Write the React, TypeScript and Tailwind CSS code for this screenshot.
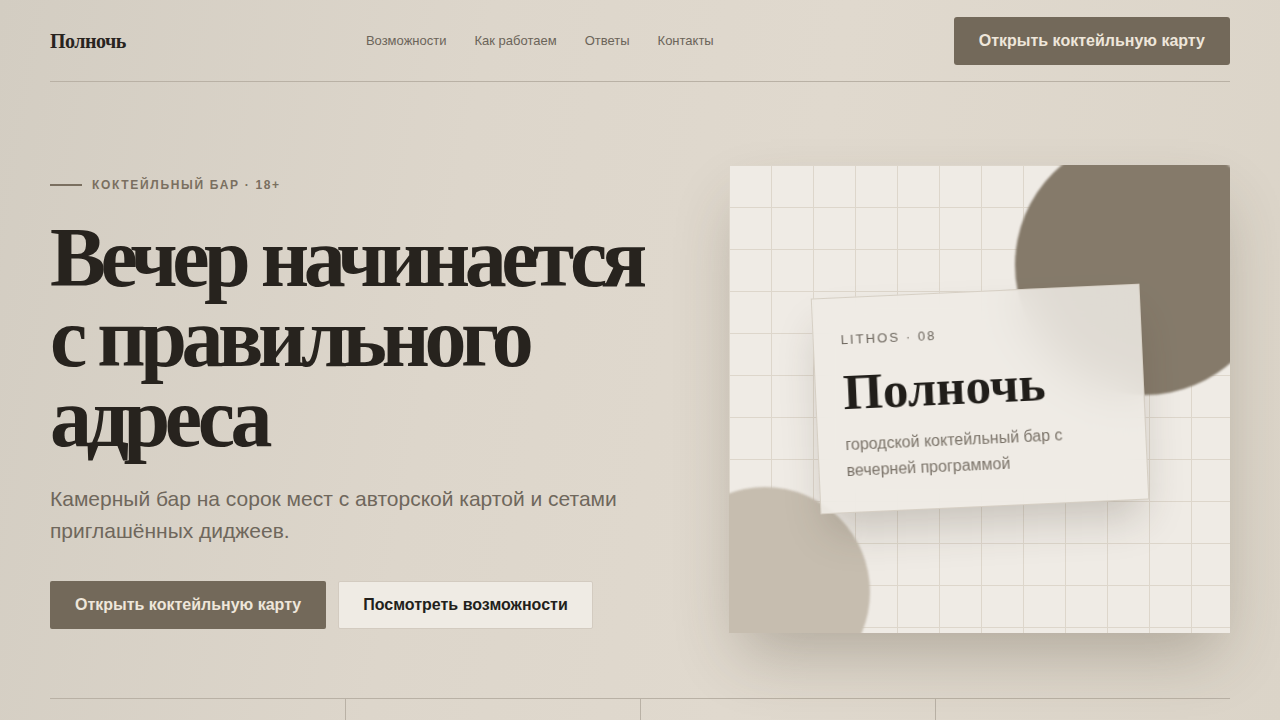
const navLinks = ['Возможности', 'Как работаем', 'Ответы', 'Контакты'];

export default function App() {
  return (
    <div className="min-h-screen w-full overflow-hidden bg-[linear-gradient(100deg,#d3cdc2_0%,#ddd6cb_35%,#e0d9ce_60%,#dbd4c8_100%)] font-['Liberation_Sans',Arial,sans-serif]">
      <div className="mx-auto w-[1180px]">
        {/* Header */}
        <header className="flex h-[82px] items-center justify-between border-b border-[#b9b1a5]">
          <div className="font-['Liberation_Serif',serif] text-[20px] font-bold tracking-[-0.025em] text-[#28241f]">
            Полночь
          </div>
          <nav className="flex items-center gap-7 text-[13px] text-[#6b6459]">
            {navLinks.map((l) => (
              <a key={l} href="#">{l}</a>
            ))}
          </nav>
          <button className="h-12 rounded-[3px] bg-[#73695a] px-[25px] text-[16px] font-bold text-[#eee6da]">
            Открыть коктейльную карту
          </button>
        </header>

        {/* Hero */}
        <section className="flex items-start justify-between pt-[83px] pb-[65px]">
          <div className="mt-[11px] w-[620px]">
            <div className="flex items-center gap-[10px]">
              <span className="h-[2px] w-8 bg-[#7a6f60]" />
              <span className="text-[12px] font-bold tracking-[0.14em] text-[#7a6f60]">
                КОКТЕЙЛЬНЫЙ БАР · 18+
              </span>
            </div>
            <h1 className="mt-[24px] font-['Liberation_Serif',serif] text-[84px] font-bold leading-[80px] tracking-[-0.065em] text-[#27231e]">
              Вечер начинается
              <br />
              с правильного
              <br />
              адреса
            </h1>
            <p className="mt-[25px] max-w-[600px] text-[21px] leading-[32px] text-[#6f675c]">
              Камерный бар на сорок мест с авторской картой и сетами приглашённых диджеев.
            </p>
            <div className="mt-[34px] flex gap-3">
              <button className="h-12 rounded-[2px] bg-[#73695a] px-[25px] text-[16px] font-bold text-[#eee6da]">
                Открыть коктейльную карту
              </button>
              <button className="h-12 rounded-[2px] border border-[#d3cbc0] bg-[#efebe4] px-6 text-[16px] font-bold text-[#221f1b]">
                Посмотреть возможности
              </button>
            </div>
          </div>

          {/* Visual panel */}
          <div className="relative h-[468px] w-[501px] overflow-hidden bg-[#efebe5] bg-[linear-gradient(to_right,#ddd6cb_1px,transparent_1px),linear-gradient(to_bottom,#ddd6cb_1px,transparent_1px)] bg-[size:42px_42px] shadow-[0_30px_60px_-12px_rgba(70,58,42,0.3)]">
            <div className="absolute left-[286px] top-[-30px] h-[260px] w-[260px] rounded-full bg-[#857a6a] blur-[1px]" />
            <div className="absolute left-[-69px] top-[322px] h-[210px] w-[210px] rounded-full bg-[#c6bdaf] blur-[1px]" />
            <div className="absolute left-1/2 top-1/2 h-[216px] w-[329px] -translate-x-1/2 -translate-y-1/2 rotate-[-2.6deg] border border-[#d6cfc4] bg-[#efebe5]/85 px-[27px] pt-[32px] shadow-[0_24px_40px_-8px_rgba(60,50,38,0.22)] backdrop-blur-xl">
              <div className="text-[13px] tracking-[0.16em] text-[#6b645b]">LITHOS · 08</div>
              <div className="mt-[14px] font-['Liberation_Serif',serif] text-[51px] font-bold leading-[56px] text-[#211e1a]">
                Полночь
              </div>
              <p className="mt-[12px] w-[240px] text-[16px] leading-[26px] text-[#7a7268]">
                городской коктейльный бар с вечерней программой
              </p>
            </div>
          </div>
        </section>

        {/* Stats strip */}
        <div className="grid grid-cols-4 border-t border-[#b9b1a5]">
          <div className="h-16" />
          <div className="h-16 border-l border-[#b9b1a5]" />
          <div className="h-16 border-l border-[#b9b1a5]" />
          <div className="h-16 border-l border-[#b9b1a5]" />
        </div>
      </div>
    </div>
  );
}
